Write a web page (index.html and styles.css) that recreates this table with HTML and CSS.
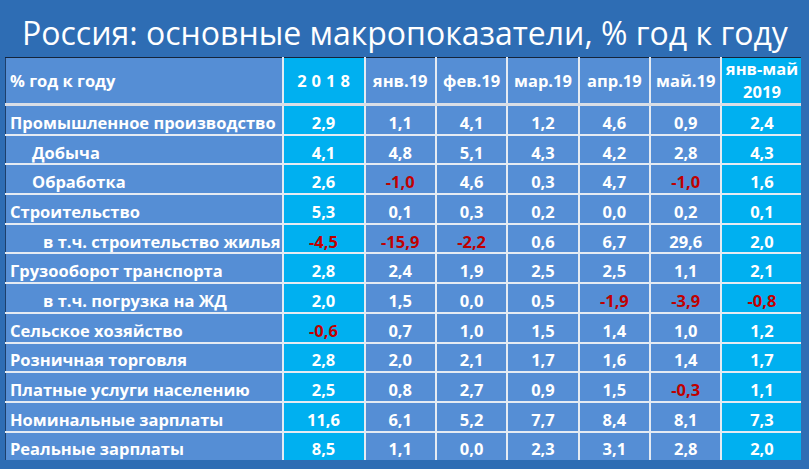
FILE: index.html
```html
<!DOCTYPE html>
<html lang="ru">
<head>
<meta charset="utf-8">
<title>Россия: основные макропоказатели</title>
<link rel="stylesheet" href="styles.css">
</head>
<body>
<div class="slide">
  <h1 class="title">Россия: основные макропоказатели, % год к году</h1>
  <table class="macro">
    <colgroup>
      <col class="c-name"><col class="c-year"><col class="c-m"><col class="c-m"><col class="c-m"><col class="c-m"><col class="c-m"><col class="c-ytd">
    </colgroup>
    <thead>
      <tr>
        <th class="name">% год к году</th>
        <th class="hl spaced">2018</th>
        <th>янв.19</th>
        <th>фев.19</th>
        <th>мар.19</th>
        <th>апр.19</th>
        <th>май.19</th>
        <th class="hl ytd">янв-май<br>2019</th>
      </tr>
    </thead>
    <tbody>
      <tr><td class="name">Промышленное производство</td><td class="hl">2,9</td><td>1,1</td><td>4,1</td><td>1,2</td><td>4,6</td><td>0,9</td><td class="hl">2,4</td></tr>
      <tr><td class="name sub">Добыча</td><td class="hl">4,1</td><td>4,8</td><td>5,1</td><td>4,3</td><td>4,2</td><td>2,8</td><td class="hl">4,3</td></tr>
      <tr><td class="name sub">Обработка</td><td class="hl">2,6</td><td class="neg">-1,0</td><td>4,6</td><td>0,3</td><td>4,7</td><td class="neg">-1,0</td><td class="hl">1,6</td></tr>
      <tr><td class="name">Строительство</td><td class="hl">5,3</td><td>0,1</td><td>0,3</td><td>0,2</td><td>0,0</td><td>0,2</td><td class="hl">0,1</td></tr>
      <tr><td class="name sub2">в т.ч. строительство жилья</td><td class="hl neg">-4,5</td><td class="neg">-15,9</td><td class="neg">-2,2</td><td>0,6</td><td>6,7</td><td>29,6</td><td class="hl">2,0</td></tr>
      <tr><td class="name">Грузооборот транспорта</td><td class="hl">2,8</td><td>2,4</td><td>1,9</td><td>2,5</td><td>2,5</td><td>1,1</td><td class="hl">2,1</td></tr>
      <tr><td class="name sub2">в т.ч. погрузка на ЖД</td><td class="hl">2,0</td><td>1,5</td><td>0,0</td><td>0,5</td><td class="neg">-1,9</td><td class="neg">-3,9</td><td class="hl neg">-0,8</td></tr>
      <tr><td class="name">Сельское хозяйство</td><td class="hl neg">-0,6</td><td>0,7</td><td>1,0</td><td>1,5</td><td>1,4</td><td>1,0</td><td class="hl">1,2</td></tr>
      <tr><td class="name">Розничная торговля</td><td class="hl">2,8</td><td>2,0</td><td>2,1</td><td>1,7</td><td>1,6</td><td>1,4</td><td class="hl">1,7</td></tr>
      <tr><td class="name">Платные услуги населению</td><td class="hl">2,5</td><td>0,8</td><td>2,7</td><td>0,9</td><td>1,5</td><td class="neg">-0,3</td><td class="hl">1,1</td></tr>
      <tr><td class="name">Номинальные зарплаты</td><td class="hl">11,6</td><td>6,1</td><td>5,2</td><td>7,7</td><td>8,4</td><td>8,1</td><td class="hl">7,3</td></tr>
      <tr><td class="name">Реальные зарплаты</td><td class="hl">8,5</td><td>1,1</td><td>0,0</td><td>2,3</td><td>3,1</td><td>2,8</td><td class="hl">2,0</td></tr>
    </tbody>
  </table>
</div>
</body>
</html>
```

FILE: styles.css
```css
html, body {
  margin: 0;
  padding: 0;
}
body {
  width: 809px;
  height: 469px;
  overflow: hidden;
  background: #2e6db4;
  font-family: "Open Sans", "Noto Sans", sans-serif;
}
.slide {
  width: 809px;
  height: 469px;
  display: flex;
  flex-direction: column;
}
.title {
  margin: 0;
  height: 57px;
  flex: none;
  box-sizing: border-box;
  padding: 13px 0 0 22px;
  font-size: 32px;
  font-weight: 400;
  line-height: 40px;
  color: #ffffff;
  white-space: nowrap;
  overflow: hidden;
}
.macro {
  margin-left: 5px;
  width: 796px;
  flex: none;
  table-layout: fixed;
  border-collapse: collapse;
  border-top: 1px solid #14243a;
  border-left: 1px solid #1d3f6b;
  color: #ffffff;
  font-weight: 700;
  font-size: 16.5px;
}
.c-name { width: 277px; }
.c-year { width: 82px; }
.c-m { width: 71.4px; }
.c-ytd { width: 80px; }
.macro th, .macro td {
  background: #558ed5;
  border: 2px solid #e4ebf3;
  padding: 0;
  text-align: center;
  vertical-align: middle;
  white-space: nowrap;
  line-height: 20px;
}
.macro tr > :first-child { border-left: none; }
.macro tr > :last-child { border-right: none; }
.macro thead th {
  border-top: none;
  height: 45px;
  border-bottom: 3px solid #d9dee6;
  font-size: 16.5px;
}
.macro tbody td {
  height: 21.7px;
  padding-top: 6px;
}
.macro tbody tr:last-child td { border-bottom: none; }
.macro .name {
  text-align: left;
  padding-left: 4px;
}
.macro .sub { padding-left: 26px; }
.macro .sub2 { padding-left: 37px; }
.macro .hl { background: #00b0f0; }
.macro .spaced { letter-spacing: 5px; padding-left: 5px; }
.macro thead .ytd { line-height: 22.5px; }
.macro .neg { color: #c00000; }
```
